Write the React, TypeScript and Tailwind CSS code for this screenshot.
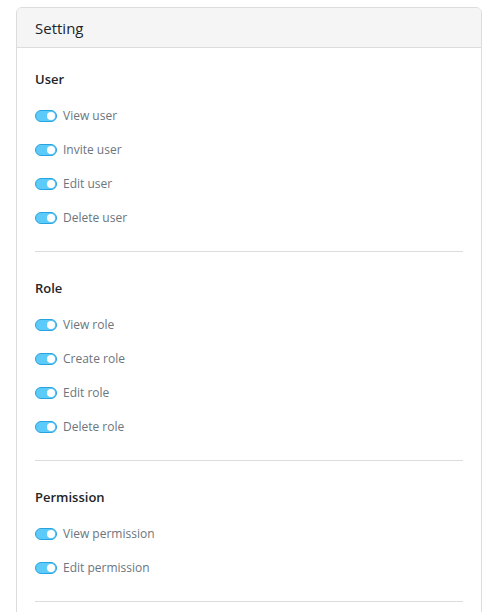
const SECTIONS = [
  { title: 'User', items: ['View user', 'Invite user', 'Edit user', 'Delete user'] },
  { title: 'Role', items: ['View role', 'Create role', 'Edit role', 'Delete role'] },
  { title: 'Permission', items: ['View permission', 'Edit permission'] },
];

function Toggle() {
  return (
    <span className="flex h-[12px] w-[22px] shrink-0 items-center justify-end rounded-full border border-[#29a3e0] bg-[#5ccbfa] pr-[1px]">
      <span className="h-[8px] w-[8px] rounded-full bg-white" />
    </span>
  );
}

export default function App() {
  return (
    <div className="min-h-[612px] bg-white pt-[7px] pl-4 pr-2 font-['Open_Sans',sans-serif]">
      <div className="overflow-hidden rounded-md border border-[#dcdcdc]">
        <div className="flex h-[40px] items-center border-b border-[#dcdcdc] bg-[#f5f5f5] px-[18px] pt-[1px] text-[15px] text-[#212529]">
          Setting
        </div>
        <div className="px-[18px] pt-[21px] pb-10">
          {SECTIONS.map((s, i) => (
            <div key={s.title}>
              <div className={i === 0 ? '' : 'pt-[26px]'}>
                <h3 className="text-[13px] leading-5 font-semibold text-[#212529]">{s.title}</h3>
                <ul className="mt-[10px]">
                  {s.items.map((it) => (
                    <li key={it} className="flex h-[34px] items-center gap-[6px] text-[12px] text-[#6c757d]">
                      <Toggle />
                      <span>{it}</span>
                    </li>
                  ))}
                </ul>
              </div>
              <div className="mt-4 border-t border-[#dcdcdc]" />
            </div>
          ))}
        </div>
      </div>
    </div>
  );
}
